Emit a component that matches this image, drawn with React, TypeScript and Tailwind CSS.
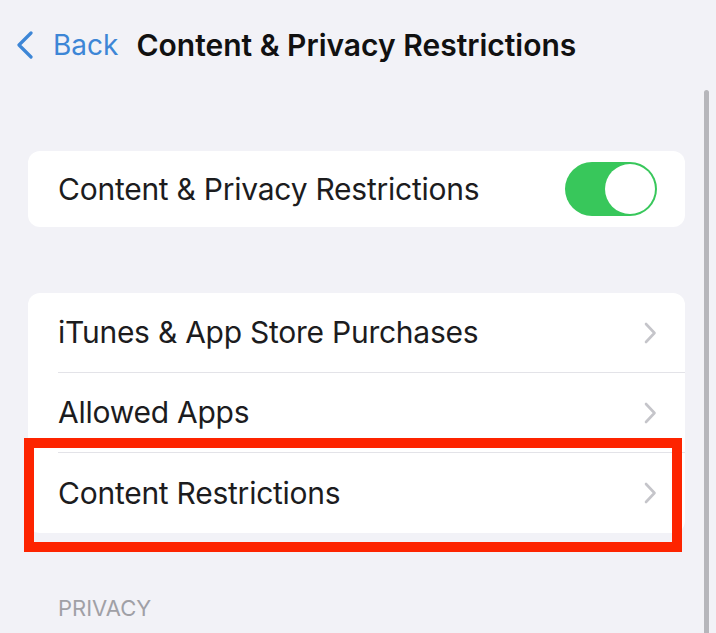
import React from "react";

const FONT = { fontFamily: "Inter, 'Liberation Sans', Arial, sans-serif" };

function Chevron() {
  return (
    <svg width="14" height="24" viewBox="0 0 14 24" fill="none">
      <path d="M3 3 L11.5 12 L3 21" stroke="#c5c5ca" strokeWidth="2.6" strokeLinecap="round" strokeLinejoin="round" />
    </svg>
  );
}

function Row({ label, last }: { label: string; last?: boolean }) {
  return (
    <div className="flex h-[80px] pl-[30px]">
      <div
        className={
          "flex flex-1 items-center justify-between pr-[28px] " +
          (last ? "" : "border-b border-[#e3e3e8]")
        }
      >
        <span className="text-[30px] text-[#1c1c1e] tracking-[-0.25px]">{label}</span>
        <Chevron />
      </div>
    </div>
  );
}

export default function App() {
  return (
    <div className="relative w-[716px] h-[633px] overflow-hidden bg-[#f2f2f7]" style={FONT}>
      <div className="flex h-[90px] items-center pl-[15px]">
        <svg width="20" height="28" viewBox="0 0 20 28" fill="none">
          <path d="M16 2 L4 14 L16 26" stroke="#3d86d6" strokeWidth="3.2" strokeLinecap="round" strokeLinejoin="round" />
        </svg>
        <span className="ml-[18px] text-[28px] text-[#3d86d6]">Back</span>
        <span className="ml-[18px] text-[30px] font-semibold text-[#111111]">
          Content &amp; Privacy Restrictions
        </span>
      </div>

      <div className="pl-[28px] pr-[31px]">
        <div className="mt-[61px] flex h-[76px] items-center justify-between rounded-[12px] bg-white pl-[30px] pr-[28px]">
          <span className="text-[30px] text-[#1c1c1e] tracking-[-0.25px]">Content &amp; Privacy Restrictions</span>
          <div className="flex h-[54px] w-[92px] items-center justify-end rounded-full bg-[#38c75b] pr-[2px]">
            <div className="h-[50px] w-[50px] rounded-full bg-white" />
          </div>
        </div>

        <div className="relative mt-[66px] rounded-[12px] bg-white">
          <Row label="iTunes & App Store Purchases" />
          <Row label="Allowed Apps" />
          <Row label="Content Restrictions" last />
          <div className="absolute left-[-4px] top-[145px] h-[114px] w-[658px] border-[10px] border-[#fd2400]" />
        </div>

        <div className="mt-[62px] pl-[30px] text-[22px] leading-[26px] text-[#a0a0a6]">PRIVACY</div>
      </div>

      <div className="absolute left-[704px] top-[90px] bottom-0 w-[5px] rounded-t-full bg-[#b6b6bb]" />
    </div>
  );
}
